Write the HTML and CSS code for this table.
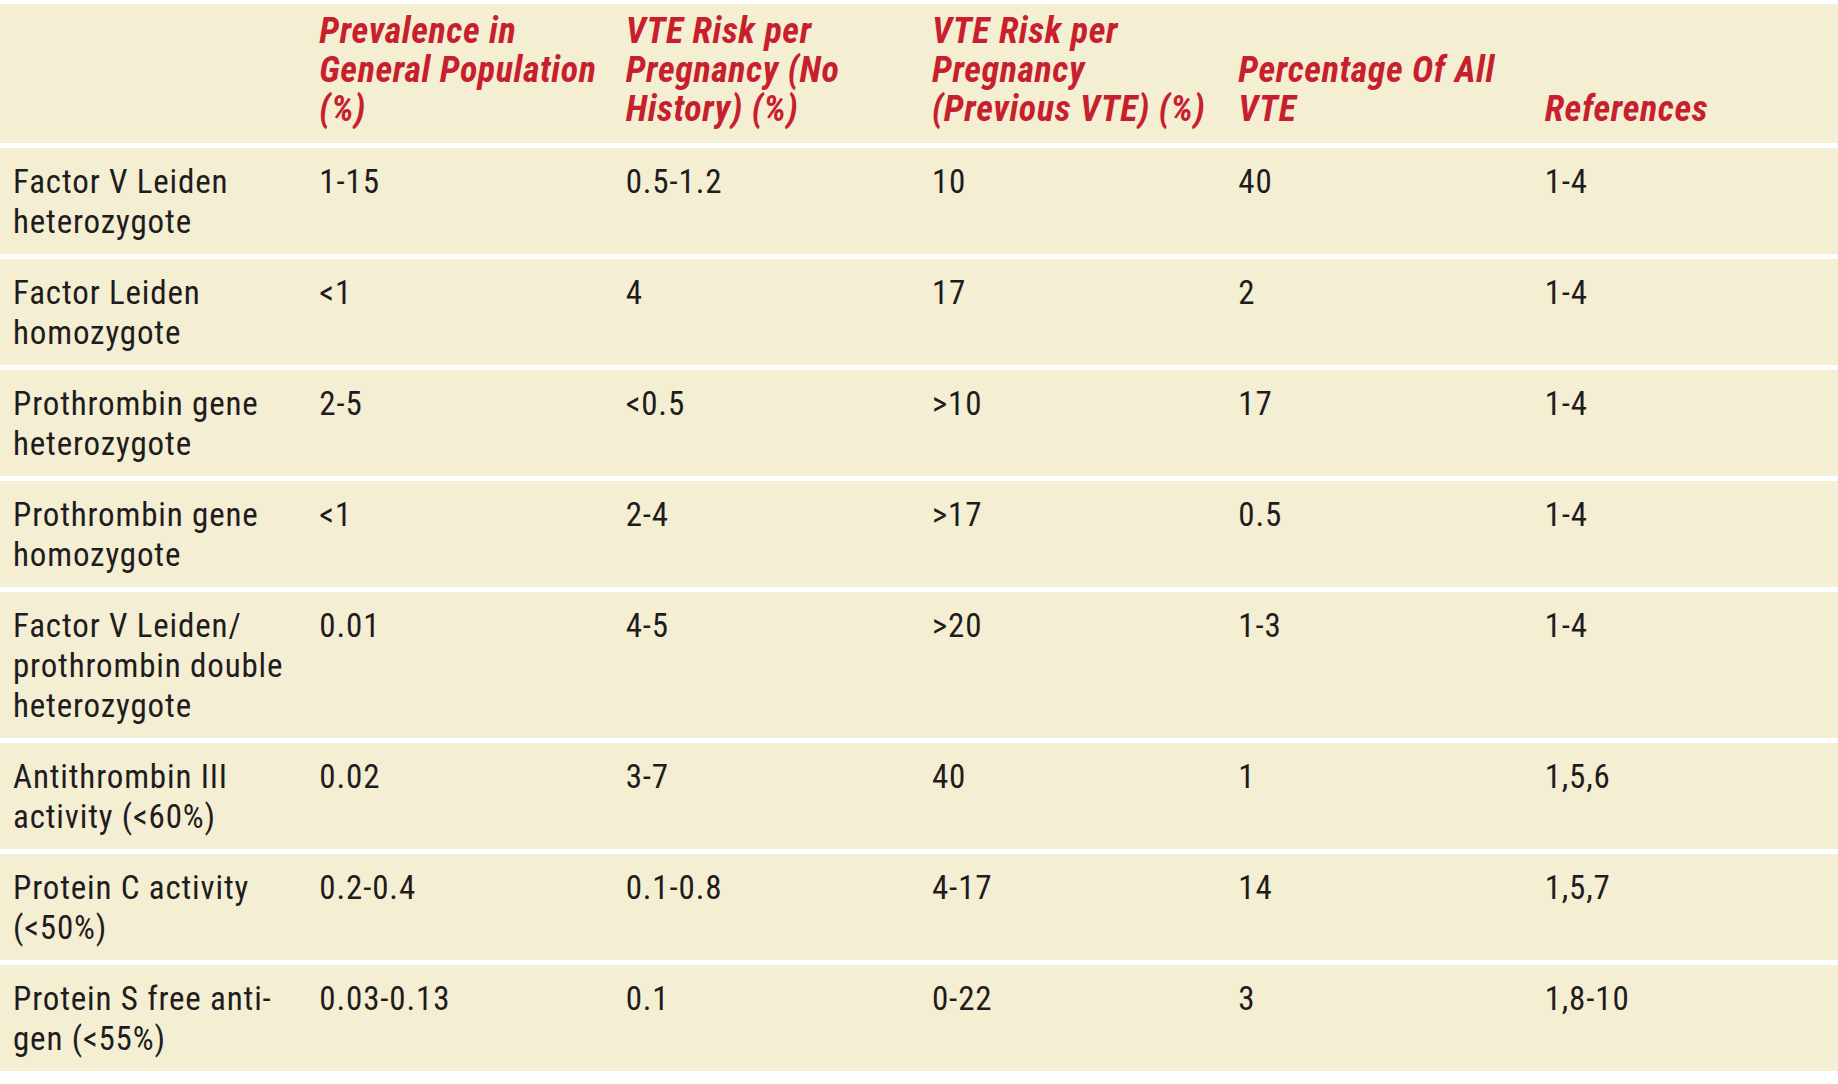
FILE: index.html
```html
<!DOCTYPE html>
<html lang="en">
<head>
<meta charset="utf-8">
<title>Inherited thrombophilias and VTE risk</title>
<link rel="stylesheet" href="styles.css">
</head>
<body>
<table class="risk-table">
  <colgroup>
    <col class="col"><col class="col"><col class="col"><col class="col"><col class="col"><col class="col">
  </colgroup>
  <thead>
    <tr>
      <th></th>
      <th>Prevalence in<br>General Population<br>(%)</th>
      <th>VTE Risk per<br>Pregnancy (No<br>History) (%)</th>
      <th>VTE Risk per<br>Pregnancy<br>(Previous VTE) (%)</th>
      <th>Percentage Of All<br>VTE</th>
      <th>References</th>
    </tr>
  </thead>
  <tbody>
    <tr><td>Factor V Leiden<br>heterozygote</td><td>1-15</td><td>0.5-1.2</td><td>10</td><td>40</td><td>1-4</td></tr>
    <tr><td>Factor Leiden<br>homozygote</td><td>&lt;1</td><td>4</td><td>17</td><td>2</td><td>1-4</td></tr>
    <tr><td>Prothrombin gene<br>heterozygote</td><td>2-5</td><td>&lt;0.5</td><td>&gt;10</td><td>17</td><td>1-4</td></tr>
    <tr><td>Prothrombin gene<br>homozygote</td><td>&lt;1</td><td>2-4</td><td>&gt;17</td><td>0.5</td><td>1-4</td></tr>
    <tr><td>Factor V Leiden/<br>prothrombin double<br>heterozygote</td><td>0.01</td><td>4-5</td><td>&gt;20</td><td>1-3</td><td>1-4</td></tr>
    <tr><td>Antithrombin III<br>activity (&lt;60%)</td><td>0.02</td><td>3-7</td><td>40</td><td>1</td><td>1,5,6</td></tr>
    <tr><td>Protein C activity<br>(&lt;50%)</td><td>0.2-0.4</td><td>0.1-0.8</td><td>4-17</td><td>14</td><td>1,5,7</td></tr>
    <tr><td>Protein S free anti-<br>gen (&lt;55%)</td><td>0.03-0.13</td><td>0.1</td><td>0-22</td><td>3</td><td>1,8-10</td></tr>
  </tbody>
</table>
</body>
</html>
```
FILE: styles.css
```css
html, body {
  margin: 0;
  padding: 0;
  background: #ffffff;
}

.risk-table {
  width: 1838px;
  table-layout: fixed;
  border-collapse: separate;
  border-spacing: 0 5px;
  margin-top: -1px;
  font-family: "Roboto Condensed", "Roboto", "Liberation Sans", sans-serif;
  color: #1f1c1d;
}

.col {
  width: 16.6667%;
}

.risk-table th,
.risk-table td {
  background: #f4eed3;
  text-align: left;
  white-space: nowrap;
  padding-left: 13px;
  padding-right: 2px;
}

.risk-table th {
  vertical-align: bottom;
  color: #c71f2e;
  font-size: 36px;
  font-weight: 700;
  font-style: italic;
  letter-spacing: 0.6px;
  line-height: 39px;
  height: 139px;
  box-sizing: border-box;
  padding-top: 8px;
  padding-bottom: 14px;
}

.risk-table td {
  vertical-align: top;
  font-size: 33px;
  font-weight: 400;
  letter-spacing: 0.85px;
  line-height: 40px;
  padding-top: 14px;
  padding-bottom: 12px;
}
```
